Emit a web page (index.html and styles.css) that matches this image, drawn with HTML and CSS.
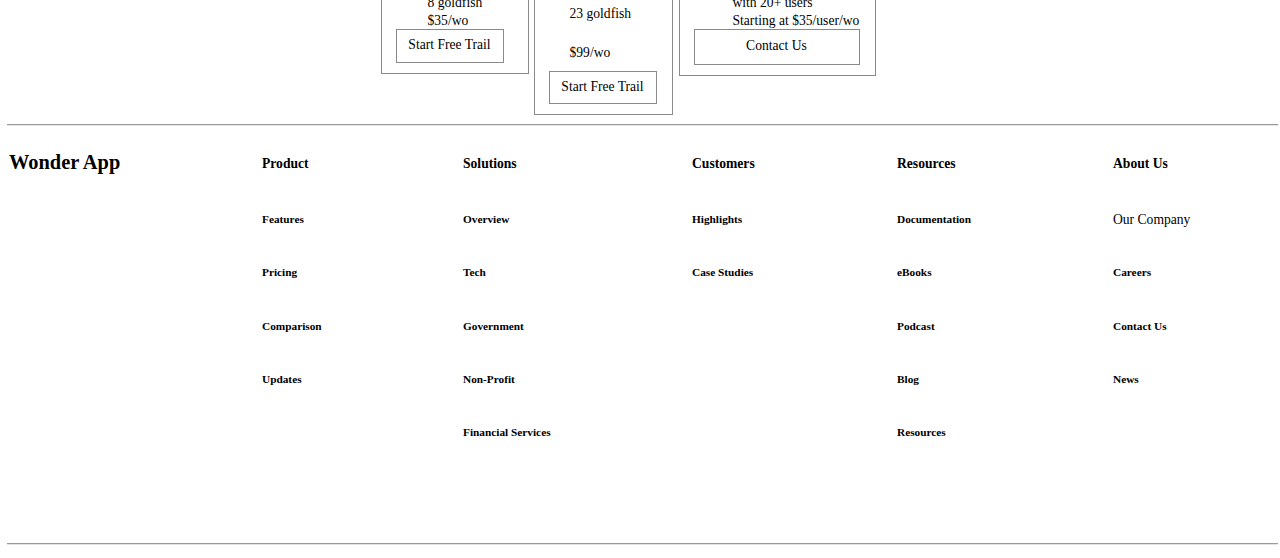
FILE: index.html
```html
<!DOCTYPE html>
<html lang="en">
<head>
<meta charset="utf-8">
<title>Wonder App</title>
<link rel="stylesheet" href="styles.css">
</head>
<body>
<section class="pricing">
  <div class="card card-basic">
    <div class="card-head">
      <h3 class="plan-name">Basic</h3>
      <p class="plan-desc">For small teams</p>
    </div>
    <div class="features">
      <p class="line">8 goldfish</p>
      <p class="line">$35/wo</p>
    </div>
    <button class="btn">Start Free Trail</button>
  </div>
  <div class="card card-pro">
    <div class="card-head">
      <h3 class="plan-name">Pro</h3>
      <p class="plan-desc">Most popular</p>
    </div>
    <div class="features">
      <p class="line">23 goldfish</p>
      <p class="line price">$99/wo</p>
    </div>
    <button class="btn">Start Free Trail</button>
  </div>
  <div class="card card-ent">
    <div class="card-head">
      <h3 class="plan-name">Enterprise</h3>
      <p class="plan-desc">For large companies</p>
    </div>
    <div class="features">
      <p class="line">with 20+ users</p>
      <p class="line">Starting at $35/user/wo</p>
    </div>
    <button class="btn">Contact Us</button>
  </div>
</section>

<hr class="rule rule-top">

<footer class="footer">
  <div class="brand">Wonder App</div>
  <div class="col">
    <h4 class="col-title">Product</h4>
    <a class="link" href="#">Features</a>
    <a class="link" href="#">Pricing</a>
    <a class="link" href="#">Comparison</a>
    <a class="link" href="#">Updates</a>
  </div>
  <div class="col">
    <h4 class="col-title">Solutions</h4>
    <a class="link" href="#">Overview</a>
    <a class="link" href="#">Tech</a>
    <a class="link" href="#">Government</a>
    <a class="link" href="#">Non-Profit</a>
    <a class="link" href="#">Financial Services</a>
  </div>
  <div class="col">
    <h4 class="col-title">Customers</h4>
    <a class="link" href="#">Highlights</a>
    <a class="link" href="#">Case Studies</a>
  </div>
  <div class="col">
    <h4 class="col-title">Resources</h4>
    <a class="link" href="#">Documentation</a>
    <a class="link" href="#">eBooks</a>
    <a class="link" href="#">Podcast</a>
    <a class="link" href="#">Blog</a>
    <a class="link" href="#">Resources</a>
  </div>
  <div class="col">
    <h4 class="col-title">About Us</h4>
    <a class="link link-plain" href="#">Our Company</a>
    <a class="link" href="#">Careers</a>
    <a class="link" href="#">Contact Us</a>
    <a class="link" href="#">News</a>
  </div>
</footer>

<hr class="rule rule-bottom">
</body>
</html>
```

FILE: styles.css
```css
html, body {
  background: #ffffff;
}

body {
  margin: 0 2px 0 7px;
  font-family: "Liberation Serif", "Times New Roman", serif;
  color: #000000;
  font-size: 13.6px;
  overflow: hidden;
}

/* ---------- pricing cards ---------- */
.pricing {
  display: flex;
  align-items: flex-start;
  justify-content: center;
  margin-top: -100px;
  padding-right: 29px;
}

.card {
  box-sizing: border-box;
  border: 1px solid #8a8a8a;
  padding: 10px 0 10px 14px;
  display: flex;
  flex-direction: column;
  align-items: flex-start;
}

.card-basic { width: 148px; margin-right: 5px; }
.card-pro { width: 139px; margin-right: 6px; }
.card-ent { width: 197px; }

.card-head {
  height: 82px;
}
.card-pro .card-head { height: 93px; }

.plan-name {
  margin: 0;
  font-size: 18px;
  line-height: 24px;
}
.plan-desc {
  margin: 8px 0 0;
  line-height: 18px;
}

.features {
  display: flex;
  flex-direction: column;
  margin-top: 1px;
  margin-bottom: -1px;
}
.card-basic .features { padding-left: 32px; }
.card-pro .features { padding-left: 21px; }
.card-ent .features { padding-left: 39px; }

.line {
  margin: 0;
  line-height: 18px;
  white-space: nowrap;
}
.price { margin-top: 21px; }

.btn {
  box-sizing: border-box;
  width: 108px;
  height: 34px;
  padding: 0 0 2px;
  margin: 0;
  border: 1px solid #8a8a8a;
  background: #ffffff;
  color: #000000;
  font-family: "Liberation Serif", "Times New Roman", serif;
  font-size: 13.6px;
  line-height: 16px;
}
.card-pro .btn { height: 33px; margin-top: 10px; }
.card-ent .btn { width: 166px; height: 36px; }

/* ---------- rules ---------- */
.rule {
  margin: 0;
  border: 0;
  border-top: 1px solid #9a9a9a;
  border-bottom: 1px solid #e4e4e4;
  height: 0;
}
.rule-top { margin-top: 9px; }

/* ---------- footer ---------- */
.footer {
  display: grid;
  grid-template-columns: 254px 201px 229px 205px 216px 1fr;
  padding: 26px 0 0 1px;
  height: 417px;
  box-sizing: border-box;
}

.brand {
  padding-left: 1px;
  font-size: 20.4px;
  font-weight: bold;
  line-height: 20px;
  white-space: nowrap;
}

.col {
  display: flex;
  flex-direction: column;
  align-items: flex-start;
  padding-top: 4px;
}

.col-title {
  margin: 0 0 39px;
  font-size: 13.6px;
  line-height: 16px;
  font-weight: bold;
}

.link {
  color: #000000;
  text-decoration: none;
  font-size: 11.3px;
  font-weight: bold;
  line-height: 16px;
  margin-bottom: 37.33px;
  white-space: nowrap;
}

.link-plain {
  font-size: 13.6px;
  font-weight: normal;
  padding-top: 1px;
  margin-bottom: 36.33px;
}
```
